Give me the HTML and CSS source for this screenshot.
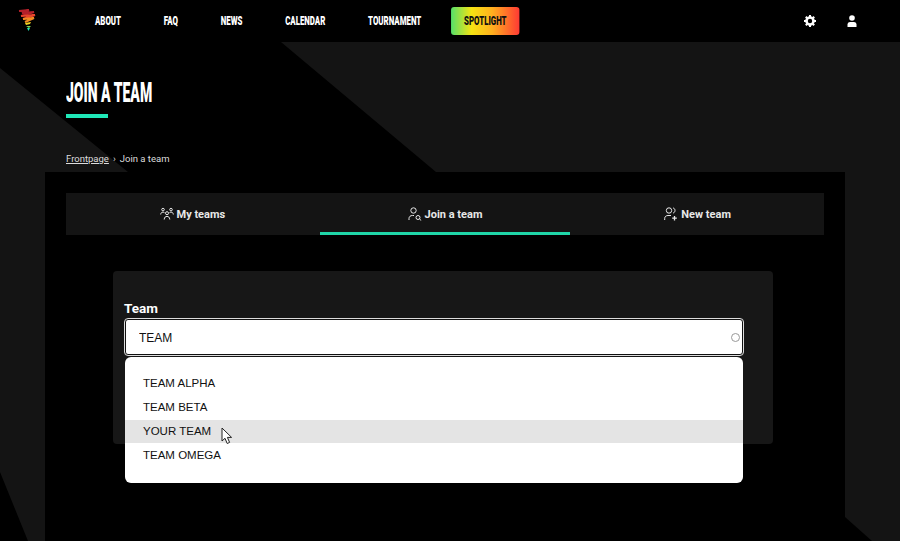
FILE: index.html
```html
<!DOCTYPE html>
<html lang="en">
<head>
    <meta charset="UTF-8">
    <meta name="viewport" content="width=device-width, initial-scale=1.0">
    <title>Join a team</title>
    <link rel="stylesheet" href="styles.css">
</head>
<body>

<!-- background shapes -->
<svg class="bg-shapes" width="900" height="541" viewBox="0 0 900 541">
    <polygon points="281,42 900,42 900,541 872,541 845,517 845,172 436,172" fill="#141414"/>
    <polygon points="0,68 128,172 45,172 45,541 28,541 0,472" fill="#141414"/>
</svg>

<div class="header">
    <svg class="logo" width="20" height="22" viewBox="0 0 20 22">
        <path d="M1 2 L11 1 L4 4 L16 3 L3 7" fill="none" stroke="#b3202a" stroke-width="2"/>
        <path d="M3 7 L17 6 L5 10" fill="none" stroke="#e8452c" stroke-width="2"/>
        <path d="M5 10 L16 9 L7 13" fill="none" stroke="#f08a24" stroke-width="2"/>
        <path d="M7 14 L13 13 L12 15 L8 16 Z" fill="#f2d21f"/>
        <path d="M8 17 L13 17 L11 19 Z" fill="#7ed957"/>
        <path d="M9 19 L12 19 L10.5 22 Z" fill="#1de9b6"/>
    </svg>
    <div class="nav">
        <a class="nav-item">ABOUT</a>
        <a class="nav-item">FAQ</a>
        <a class="nav-item">NEWS</a>
        <a class="nav-item">CALENDAR</a>
        <a class="nav-item">TOURNAMENT</a>
        <a class="nav-item spotlight">SPOTLIGHT</a>
    </div>
    <div class="header-icons">
        <svg width="12" height="12" viewBox="0 0 12 12">
            <circle cx="6" cy="6" r="3.5" fill="none" stroke="#fff" stroke-width="2.6"/>
            <path d="M6 0V2M6 10V12M0 6H2M10 6H12M1.8 1.8L3 3M9 9L10.2 10.2M1.8 10.2L3 9M9 3L10.2 1.8" stroke="#fff" stroke-width="2"/>
        </svg>
        <svg width="10" height="12" viewBox="0 0 10 12">
            <circle cx="5" cy="3" r="2.8" fill="#fff"/>
            <path d="M0.5 12V9.5C0.5 7.8 2 7 3 7H7C8 7 9.5 7.8 9.5 9.5V12Z" fill="#fff"/>
        </svg>
    </div>
</div>

<div class="page-head">
    <h1>JOIN A TEAM</h1>
    <div class="title-bar"></div>
    <div class="breadcrumb"><a>Frontpage</a><span class="sep">›</span><span>Join a team</span></div>
</div>

<div class="panel">
    <div class="tabs">
        <div class="tab">
            <svg width="14" height="14" viewBox="0 0 14 14" fill="none" stroke="#e8e8e8" stroke-width="1">
                <circle cx="7" cy="6.2" r="1.5"/>
                <path d="M4.2 12.5C4.4 10.2 5.5 9.4 7 9.4S9.6 10.2 9.8 12.5"/>
                <circle cx="3" cy="2.6" r="1.3"/>
                <circle cx="11" cy="2.6" r="1.3"/>
                <path d="M0.7 7.5C0.8 5.8 1.7 5.2 3 5.2C3.6 5.2 4.1 5.4 4.5 5.7M13.3 7.5C13.2 5.8 12.3 5.2 11 5.2C10.4 5.2 9.9 5.4 9.5 5.7"/>
            </svg>
            <span>My teams</span>
        </div>
        <div class="tab active">
            <svg width="14" height="14" viewBox="0 0 14 14" fill="none" stroke="#e8e8e8" stroke-width="1">
                <circle cx="5.5" cy="3.5" r="2.7"/>
                <path d="M1 13V11.5C1 9.5 2.5 8.5 4.5 8.5H6"/>
                <circle cx="10" cy="10.5" r="2"/>
                <path d="M11.5 12L13.2 13.5"/>
            </svg>
            <span>Join a team</span>
        </div>
        <div class="tab">
            <svg width="14" height="14" viewBox="0 0 14 14" fill="none" stroke="#e8e8e8" stroke-width="1">
                <circle cx="5" cy="3.5" r="2.7"/>
                <path d="M0.7 13V11.5C0.7 9.5 2.2 8.5 4 8.5H7"/>
                <path d="M9 1C10.3 1.2 11 2.2 11 3.5S10.3 5.8 9 6"/>
                <path d="M10.5 9V13.5M8.2 11.2H12.8" stroke-width="1.3"/>
            </svg>
            <span>New team</span>
        </div>
    </div>

    <div class="card">
        <label class="field-label" for="team">Team</label>
        <div class="select-wrap">
            <input class="team-input" id="team" type="text" value="TEAM">
            <span class="spinner"></span>
            <ul class="dropdown">
                <li>TEAM ALPHA</li>
                <li>TEAM BETA</li>
                <li class="hover">YOUR TEAM
                    <svg class="cursor" width="14" height="18" viewBox="0 0 14 18">
                        <path d="M1 1V14L4 11.3L6.2 16.5L8.6 15.4L6.4 10.4H10.6Z" fill="#fff" stroke="#222" stroke-width="1"/>
                    </svg>
                </li>
                <li>TEAM OMEGA</li>
            </ul>
        </div>
    </div>
</div>

</body>
</html>
```

FILE: styles.css
```css
html, body {
    height: 541px;
    overflow: hidden;
}
body {
    margin: 0;
    background-color: #000;
    color: #fff;
    font-family: "Liberation Sans", Arial, sans-serif;
    position: relative;
}
.bg-shapes {
    position: absolute;
    top: 0;
    left: 0;
}
.header {
    position: relative;
    height: 42px;
    display: flex;
    align-items: center;
    padding-left: 18px;
}
.logo {
    flex: none;
    margin-top: -2px;
}
/* the font is condensed in the design, none is installed so the row is squeezed */
.nav {
    flex: none;
    width: 500px;
    display: flex;
    align-items: center;
    gap: 27.6px;
    margin-left: 44px;
    transform: scaleX(0.605);
    transform-origin: left center;
}
.nav-item {
    flex: none;
    display: block;
    padding: 0 21.5px;
    height: 28px;
    line-height: 28px;
    font-family: Roboto, sans-serif;
    font-weight: 900;
    font-size: 13px;
    color: #fff;
}
.spotlight {
    color: #111;
    border-radius: 5px / 3px;
    background: linear-gradient(90deg, #55e06a 0%, #f5e312 30%, #ffb01e 60%, #ff3a34 100%);
}
.header-icons {
    display: flex;
    align-items: center;
    gap: 31px;
    margin-left: auto;
    margin-right: 43px;
}
.page-head {
    position: relative;
    padding-left: 66px;
    height: 130px;
}
h1 {
    margin: 0;
    padding-top: 37px;
    font-family: Roboto, sans-serif;
    font-weight: 900;
    font-size: 28px;
    line-height: 28px;
    color: #fff;
    white-space: nowrap;
    transform: scaleX(0.5);
    transform-origin: left center;
}
.title-bar {
    width: 42px;
    height: 4px;
    margin-top: 7px;
    background-color: #1fe8b8;
}
.breadcrumb {
    margin-top: 35px;
    font-family: Roboto, sans-serif;
    font-size: 9.5px;
    line-height: 12px;
    color: #ddd;
}
.breadcrumb a {
    text-decoration: underline;
}
.breadcrumb .sep {
    margin: 0 4px;
}
.panel {
    position: relative;
    width: 758px;
    height: 348px;
    margin-left: 45px;
    padding: 21px;
    background-color: #000;
}
.tabs {
    display: grid;
    grid-template-columns: repeat(3, 1fr);
    height: 42px;
    background-color: #141414;
}
.tab {
    display: flex;
    align-items: center;
    justify-content: center;
    gap: 3px;
    height: 42px;
    box-sizing: border-box;
    font-family: Roboto, sans-serif;
    font-size: 11px;
    font-weight: bold;
    color: #e8e8e8;
}
.tab.active {
    position: relative;
}
.tab.active::after {
    content: "";
    position: absolute;
    left: 1px;
    right: 1px;
    bottom: 0;
    height: 3px;
    background-color: #1fd6a8;
}
.card {
    width: 660px;
    height: 173px;
    box-sizing: border-box;
    margin: 36px 0 0 47px;
    padding: 30px 11px 0;
    background-color: #171717;
    border-radius: 4px;
}
.field-label {
    display: block;
    height: 18px;
    font-family: Roboto, sans-serif;
    font-size: 13.5px;
    font-weight: bold;
    line-height: 15px;
    color: #fff;
}
.select-wrap {
    position: relative;
    width: 620px;
}
.team-input {
    display: block;
    width: 618px;
    height: 36px;
    box-sizing: border-box;
    margin: 0 0 0 1px;
    padding: 2px 13px 0;
    border: 1px solid #111;
    outline: 1px solid #ddd;
    outline-offset: 0;
    border-radius: 3px;
    background-color: #fff;
    color: #111;
    font-family: "Liberation Sans", Arial, sans-serif;
    font-size: 12px;
}
.spinner {
    position: absolute;
    top: 14px;
    right: 4px;
    width: 7px;
    height: 7px;
    border: 1.5px solid #999;
    border-radius: 50%;
}
.dropdown {
    position: absolute;
    top: 38px;
    left: 1px;
    right: 1px;
    margin: 0;
    padding: 14px 0 16px;
    list-style: none;
    background-color: #fff;
    border-radius: 6px;
    color: #111;
    font-size: 11.5px;
}
.dropdown li {
    position: relative;
    height: 24px;
    line-height: 24px;
    padding-left: 18px;
}
.dropdown li.hover {
    background: linear-gradient(#fff 1px, #e4e4e4 1px);
}
.cursor {
    position: absolute;
    top: 8px;
    left: 96px;
}
```
